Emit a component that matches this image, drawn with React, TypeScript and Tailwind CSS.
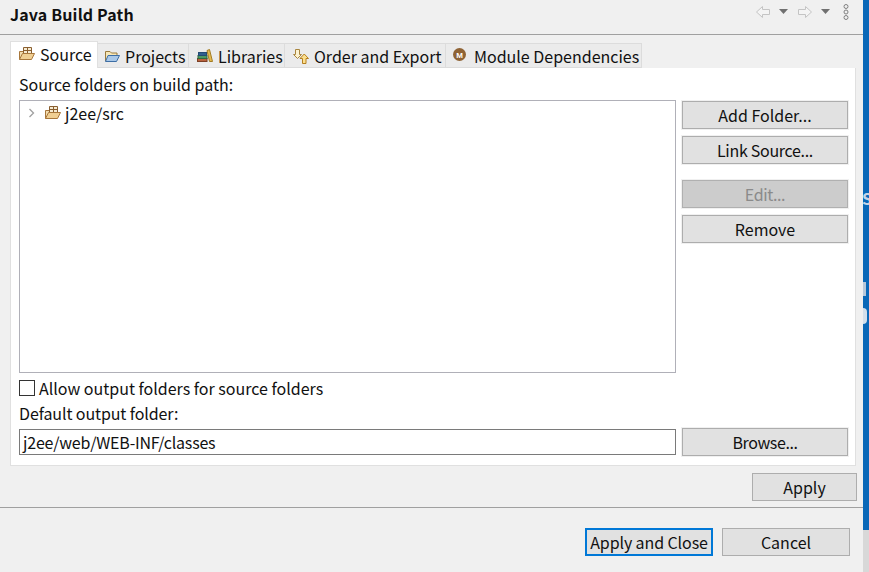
const font = { fontFamily: '"Noto Sans CJK SC", "Noto Sans", sans-serif' };

function PackageIcon({ className = "" }: { className?: string }) {
  return (
    <svg width="16" height="16" viewBox="0 0 16 16" className={className}>
      <path d="M0.5 13.5 V5.5 H4.5 V7.5" fill="#f2dcae" stroke="#a8773b" />
      <path d="M4.5 1.5 H12.5 V8 H4.5 Z" fill="#f6ebd2" stroke="#8a5f30" />
      <path d="M8.5 1.5 V8 M4.5 4.5 H12.5" stroke="#8a5f30" />
      <path d="M0.5 13.5 L3.5 7.5 H15.5 L12.5 13.5 Z" fill="#f0cf93" stroke="#a8773b" />
    </svg>
  );
}

function FolderIcon() {
  return (
    <svg width="16" height="16" viewBox="0 0 16 16">
      <path d="M1.5 13 V3.5 H6 L7.5 5 H13 V8" fill="#f6e6b6" stroke="#9a7a3c" />
      <path d="M1.5 13.5 L4 7.5 H15.5 L12.5 13.5 Z" fill="#a9c8e8" stroke="#3d6ea5" />
    </svg>
  );
}

function BooksIcon() {
  return (
    <svg width="16" height="16" viewBox="0 0 16 16">
      <rect x="0.5" y="10.5" width="9.5" height="3" fill="#b9613c" stroke="#7c3f25" />
      <rect x="1" y="7.5" width="9" height="3" fill="#4d9a62" stroke="#2e6a3f" />
      <rect x="1.5" y="4.5" width="8" height="3" fill="#2f5f8f" stroke="#244b73" />
      <path d="M10 2.5 L12.5 1.5 L15.5 13.5 L12.5 13.5 Z" fill="#e5b94e" stroke="#a27c24" />
    </svg>
  );
}

function OrderIcon() {
  return (
    <svg width="16" height="16" viewBox="0 0 16 16">
      <path d="M2.5 1.5 H6.5 V6.5 H8.5 L4.5 10.5 L0.5 6.5 H2.5 Z" fill="#fdf3d0" stroke="#a98640" />
      <path d="M9.5 15.5 H13 V10.5 H15.5 L11.25 6 L7 10.5 H9.5 Z" fill="#fbdf8e" stroke="#b57f1f" />
    </svg>
  );
}

function ModuleIcon() {
  return (
    <svg width="16" height="16" viewBox="0 0 16 16">
      <circle cx="6.5" cy="6.5" r="6.5" fill="#8f6335" />
      <text x="6.5" y="9.5" textAnchor="middle" fontSize="8" fontWeight="700" fill="#fff" fontFamily="Liberation Sans">M</text>
    </svg>
  );
}

function Tab({ icon, label, w }: { icon: React.ReactNode; label: string; w: string }) {
  return (
    <div className={`flex h-[25px] items-center gap-[5px] border-y border-r border-[#dcdcdc] bg-[#ebebeb] text-[16px] leading-none text-[#111] ${w}`}>
      {icon}
      <span>{label}</span>
    </div>
  );
}

function Btn({ label, disabled = false, className = "" }: { label: string; disabled?: boolean; className?: string }) {
  return (
    <div
      className={`flex h-[28px] items-center justify-center border pb-[1px] text-[16px] leading-none ${
        disabled ? "border-[#b0b0b0] bg-[#cccccc] text-[#8a8a8a]" : "border-[#adadad] bg-[#e1e1e1] text-[#111]"
      } ${className}`}
    >
      {label}
    </div>
  );
}

export default function App() {
  return (
    <div className="flex h-[572px] w-[869px] overflow-hidden" style={font}>
      <div className="flex w-[863px] flex-col bg-[#f0f0f0]">
        <header className="flex h-[35px] shrink-0 items-center justify-between border-b border-[#a0a0a0] pl-[10px] pr-[14px]">
          <h1 className="mb-[6px] text-[16px] font-bold leading-none tracking-[0.15px] text-[#111]">Java Build Path</h1>
          <div className="flex items-center pb-[11px]">
            <svg width="14" height="12" viewBox="0 0 14 12"><path d="M0.5 6 L6.5 0.5 V3.5 H13.5 V8.5 H6.5 V11.5 Z" fill="#f4f4f4" stroke="#c4c4c4" /></svg>
            <svg width="9" height="5" viewBox="0 0 9 5" className="ml-[9px]"><path d="M0 0 H9 L4.5 5 Z" fill="#707070" /></svg>
            <svg width="14" height="12" viewBox="0 0 14 12" className="ml-[10px]"><path d="M13.5 6 L7.5 0.5 V3.5 H0.5 V8.5 H7.5 V11.5 Z" fill="#f4f4f4" stroke="#c4c4c4" /></svg>
            <svg width="9" height="5" viewBox="0 0 9 5" className="ml-[9px]"><path d="M0 0 H9 L4.5 5 Z" fill="#707070" /></svg>
            <svg width="6" height="16" viewBox="0 0 6 16" className="ml-[13px]">
              <circle cx="3" cy="2.5" r="2" fill="none" stroke="#808080" />
              <circle cx="3" cy="8" r="2" fill="none" stroke="#808080" />
              <circle cx="3" cy="13.5" r="2" fill="none" stroke="#808080" />
            </svg>
          </div>
        </header>

        <div className="flex pl-[10px] pt-[6px]">
          <div className="flex h-[27px] w-[88px] items-center gap-[5px] border border-b-0 border-[#e0e0e0] bg-white pb-[2px] pl-[8px] text-[16px] leading-none text-[#111]">
            <PackageIcon />
            <span>Source</span>
          </div>
          <div className="flex items-end">
            <Tab w="w-[91px] pl-[6px]" label="Projects" icon={<FolderIcon />} />
            <Tab w="w-[96px] pl-[8px]" label="Libraries" icon={<BooksIcon />} />
            <Tab w="w-[161px] pl-[8px]" label="Order and Export" icon={<OrderIcon />} />
            <Tab w="w-[196px] pl-[7px]" label="Module Dependencies" icon={<ModuleIcon />} />
          </div>
        </div>

        <main className="ml-[10px] flex h-[398px] w-[846px] flex-col border border-t-0 border-[#e0e0e0] bg-white pl-[8px] pr-[7px]">
          <div className="flex h-[32px] items-center text-[16px] leading-none text-[#111]">Source folders on build path:</div>
          <div className="flex h-[273px] gap-[6px]">
            <div className="w-[657px] border border-[#b0b0b8]">
              <div className="flex items-center pl-[8px] pt-[4px] text-[16px] leading-none text-[#111]">
                <svg width="8" height="10" viewBox="0 0 8 10"><path d="M1.5 1 L5.5 5 L1.5 9" fill="none" stroke="#a0a0a0" strokeWidth="1.3" /></svg>
                <PackageIcon className="ml-[9px]" />
                <span className="ml-[4px]">j2ee/src</span>
              </div>
            </div>
            <div className="flex w-[166px] flex-col pt-[1px]">
              <Btn label="Add Folder..." className="ring-1 ring-[#f0f0f0]" />
              <Btn label="Link Source..." className="mt-[7px] tracking-[-0.3px] ring-1 ring-[#f0f0f0]" />
              <Btn label="Edit..." disabled className="mt-[16px] tracking-[-0.4px] ring-1 ring-[#f0f0f0]" />
              <Btn label="Remove" className="mt-[7px] ring-1 ring-[#f0f0f0]" />
            </div>
          </div>
          <label className="mt-[5px] flex h-[19px] items-center gap-[4px] text-[16px] leading-none text-[#111]">
            <span className="h-[16px] w-[16px] border border-[#333] bg-white" />
            Allow output folders for source folders
          </label>
          <div className="mt-[6px] flex h-[19px] items-center text-[16px] leading-none tracking-[-0.1px] text-[#111]">Default output folder:</div>
          <div className="mt-[6px] flex gap-[6px]">
            <div className="mt-[1px] flex h-[26px] w-[657px] items-center border border-[#7a7a7a] pb-[1px] pl-[3px] text-[16px] leading-none tracking-[-0.2px] text-[#111]">j2ee/web/WEB-INF/classes</div>
            <Btn label="Browse..." className="w-[166px] tracking-[-0.4px] ring-1 ring-[#f0f0f0]" />
          </div>
        </main>

        <div className="flex justify-end pr-[6px] pt-[7px]">
          <Btn label="Apply" className="w-[105px]" />
        </div>
        <div className="mt-[6px] flex flex-1 items-start justify-end gap-[9px] border-t border-[#a0a0a0] pr-[13px] pt-[20px]">
          <div className="flex h-[28px] w-[128px] items-center justify-center border-2 border-[#0078d7] bg-[#e1e1e1] pb-[1px] text-[16px] leading-none tracking-[-0.1px] text-[#111]">Apply and Close</div>
          <Btn label="Cancel" className="w-[128px]" />
        </div>
      </div>
      <div className="relative flex w-[6px] flex-col overflow-hidden">
        <div className="h-[530px] bg-[#0a68b8]" />
        <div className="flex-1 bg-[#d8d8d8]" />
        <span className="absolute left-[-1px] top-[190px] text-[16px] font-bold leading-none text-[#c5d6e8]">S</span>
        <span className="absolute left-[0px] top-[282px] h-[14px] w-[3px] bg-[#b8c8da]" />
        <span className="absolute left-[0px] top-[308px] h-[16px] w-[4px] rounded-r-full bg-[#d3dfeb]" />
      </div>
    </div>
  );
}
